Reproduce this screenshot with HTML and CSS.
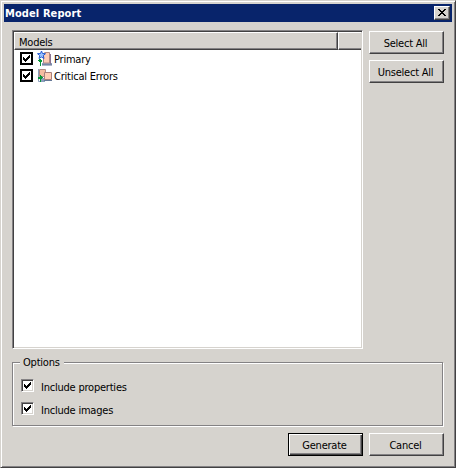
FILE: index.html
```html
<!DOCTYPE html>
<html lang="en">
<head>
<meta charset="utf-8">
<title>Model Report</title>
<link rel="stylesheet" href="styles.css">
</head>
<body>
<svg width="0" height="0" class="defs" aria-hidden="true">
  <symbol id="check" viewBox="0 0 7 7"><path d="M0 2h1v1h1v1h1v-1h1v-1h1v-1h1v-1h1v3h-1v1h-1v1h-1v1h-1v1h-1v-1h-1v-1h-1z"/></symbol>
</svg>
<div class="window">
  <header class="titlebar">
    <span class="title">Model Report</span>
    <button class="close" aria-label="Close"><svg width="8" height="7" viewBox="0 0 8 7" shape-rendering="crispEdges"><path d="M0 0h2v1h1v1h2v-1h1v-1h2v1h-1v1h-1v1h-1v1h1v1h1v1h1v1h-2v-1h-1v-1h-2v1h-1v1h-2v-1h1v-1h1v-1h1v-1h-1v-1h-1v-1h-1z"/></svg></button>
  </header>
  <main class="content">
    <section class="upper">
      <div class="list">
        <div class="list-head"><div class="column">Models</div><div class="column rest"></div></div>
        <div class="row">
          <span class="box flat"><svg width="7" height="7" shape-rendering="crispEdges"><use href="#check"/></svg></span>
          <svg class="icon" width="16" height="17" viewBox="0 0 16 17">
            <path d="M5 13h10v2H5z" fill="#8ba0bd"/>
            <path d="M5 15h10" stroke="#5e6f91"/>
            <path d="M6.500 13V3.500L8 2.500h4.500V13z" fill="#ffceb5" stroke="#b08a86"/>
            <path d="M13.500 4v10" stroke="#8a7492"/>
            <path d="M4.500 1L5.500 3.500 8.500 3.700 6.300 5.500 7 8.500 4.500 7 2 8.500 2.700 5.500.500 3.700 3.500 3.500z" fill="#9cc4ff" stroke="#2459d0"/>
            <path d="M2 9h2v1h1v2h-1v4h-1v-4h-1v-1h-1v-1h1z" fill="#079638"/>
          </svg>
          <span class="name">Primary</span>
        </div>
        <div class="row">
          <span class="box flat"><svg width="7" height="7" shape-rendering="crispEdges"><use href="#check"/></svg></span>
          <svg class="icon" width="16" height="17" viewBox="0 0 16 17">
            <path d="M1.500 2v12.500H8" fill="none" stroke="#8ba0bd"/>
            <path d="M2.500 2.500h6v7h-6z" fill="#f4bda0" stroke="#b08a86"/>
            <path d="M3 11h5v4H3z" fill="#8ba0bd"/>
            <path d="M7.500 5.500h7v7h-7z" fill="#ffceb5" stroke="#a9817c"/>
            <path d="M7 13.500h8" stroke="#657898"/>
            <path d="M3 8h1v1h1v1h1v1h-1v1h-1v3h-1v-3h-2v-2h2z" fill="#079638"/>
          </svg>
          <span class="name">Critical Errors</span>
        </div>
      </div>
      <div class="side">
        <button class="button">Select All</button>
        <button class="button">Unselect All</button>
      </div>
    </section>
    <fieldset class="options">
      <legend>Options</legend>
      <label class="option"><span class="box sunken"><svg width="7" height="7" shape-rendering="crispEdges"><use href="#check"/></svg></span><span class="caption">Include properties</span></label>
      <label class="option"><span class="box sunken"><svg width="7" height="7" shape-rendering="crispEdges"><use href="#check"/></svg></span><span class="caption">Include images</span></label>
    </fieldset>
    <footer class="actions">
      <button class="button default">Generate</button>
      <button class="button">Cancel</button>
    </footer>
  </main>
</div>
</body>
</html>
```
FILE: styles.css
```css
* { box-sizing: border-box; }
body {
  margin: 0;
  width: 456px;
  height: 468px;
  overflow: hidden;
  font: 11px/13px "DejaVu Sans Condensed", "DejaVu Sans", sans-serif;
  font-stretch: condensed;
  letter-spacing: -.22px;
  color: #000;
}
.defs { position: absolute; }
.window {
  width: 456px;
  height: 468px;
  padding: 2px;
  background: #d6d3ce;
  border: 1px solid;
  border-color: #d6d3ce #424142 #424142 #d6d3ce;
  box-shadow: inset 1px 1px #fff, inset -1px -1px #848284;
}
.titlebar {
  display: flex;
  align-items: center;
  justify-content: space-between;
  height: 18px;
  margin: 1px 1px 0;
  padding: 0 2px 0 1px;
  background: #08246b;
  color: #fff;
  font-weight: bold;
}
.titlebar .title { letter-spacing: .1px; }
button { font: inherit; color: inherit; letter-spacing: inherit; }
.close, .button {
  display: flex;
  align-items: center;
  justify-content: center;
  padding: 0;
  background: #d6d3ce;
  border: 1px solid;
  border-color: #fff #424142 #424142 #fff;
  box-shadow: inset -1px -1px #848284;
}
.close { width: 16px; height: 14px; padding: 0 1px 1px 0; color: #000; }
.content { padding: 8px 9px 0; }
.upper { display: flex; gap: 6px; }
.list {
  width: 351px;
  height: 319px;
  padding: 1px;
  background: #fff;
  border: 1px solid;
  border-color: #848284 #fff #fff #848284;
  box-shadow: inset 1px 1px #424142, inset -1px -1px #d6d3ce;
}
.list-head { display: flex; height: 18px; }
.column {
  width: 324px;
  padding: 3px 0 0 4px;
  background: #d6d3ce;
  border: 1px solid;
  border-color: #fff #424142 #424142 #fff;
  box-shadow: inset -1px -1px #848284;
}
.rest { flex: 1; width: auto; border-right: 0; box-shadow: inset 0 -1px #848284; }
.row { display: flex; align-items: center; height: 17px; padding-left: 6px; }
.name { padding-top: 2px; }
.box { display: flex; align-items: center; justify-content: center; width: 13px; height: 13px; background: #fff; }
.flat { border: 2px solid #000; }
.icon { margin: 0 1px 0 4px; }
.side { display: flex; flex-direction: column; gap: 6px; padding-top: 1px; }
.button { width: 75px; height: 23px; padding: 2px 2px 0 0; }
.options {
  width: 431px;
  height: 70px;
  margin: 7px 0 0;
  padding: 5px 7px 0 8px;
  border: 1px solid #848284;
  box-shadow: 1px 1px #fff, inset 1px 1px #fff;
}
.options legend { height: 13px; margin-left: -1px; padding: 0 4px 0 3px; background: #d6d3ce; }
.option { display: flex; align-items: center; gap: 7px; height: 23px; }
.caption { padding-top: 3px; }
.sunken { border: 1px solid; border-color: #848284 #fff #fff #848284; box-shadow: inset 1px 1px #424142, inset -1px -1px #d6d3ce; }
.actions { display: flex; justify-content: flex-end; gap: 6px; margin-top: 7px; }
.default { border-color: #000; box-shadow: inset 1px 1px #fff, inset -1px -1px #424142, inset -2px -2px #848284; }
```
